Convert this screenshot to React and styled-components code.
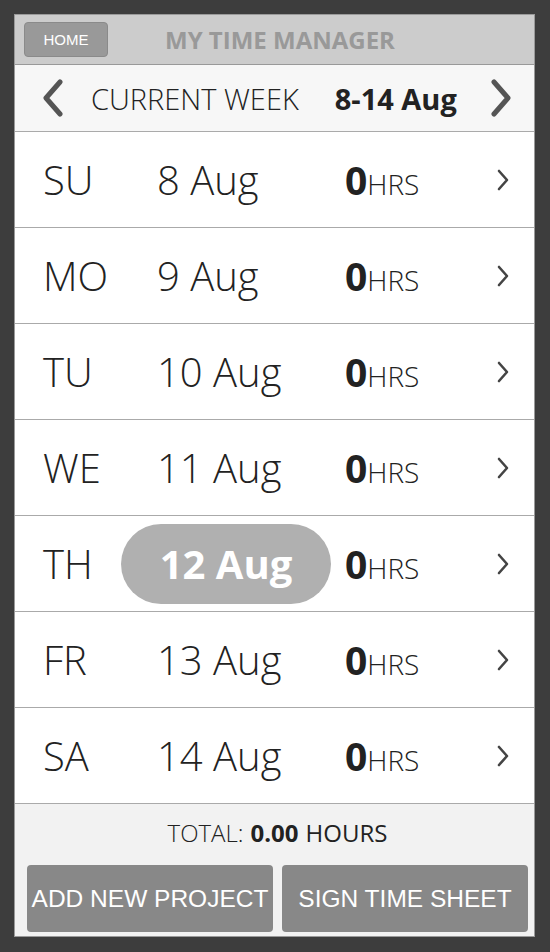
import React from 'react';
import styled, { createGlobalStyle } from 'styled-components';

const Global = createGlobalStyle`
  html, body { margin: 0; padding: 0; background: #3d3d3d; }
  body { font-family: "Open Sans", "Liberation Sans", sans-serif; }
`;

const Frame = styled.div`
  width: 550px;
  height: 952px;
  box-sizing: border-box;
  padding: 14px 15px 15px 14px;
  background: #3d3d3d;
`;

const Screen = styled.div`
  height: 100%;
  display: flex;
  flex-direction: column;
  background: #fff;
  border: 1px solid #9a9a9a;
  box-sizing: border-box;
`;

const Header = styled.div`
  height: 49px;
  display: flex;
  align-items: center;
  background: #cccccc;
  border-bottom: 1px solid #999;
  padding-left: 9px;
`;

const HomeButton = styled.button`
  width: 84px;
  height: 35px;
  background: #999;
  border: 1px solid #8a8a8a;
  border-radius: 4px;
  color: #fff;
  font-family: "Liberation Sans", Arial, sans-serif;
  font-size: 15px;
  padding: 0;
`;

const Title = styled.div`
  flex: 1;
  text-align: center;
  margin-right: 82px;
  font-weight: 700;
  font-size: 24px;
  color: #999;
`;

const WeekBar = styled.div`
  height: 66px;
  display: flex;
  align-items: center;
  background: #f7f7f7;
  border-bottom: 1px solid #aaa;
  padding: 0 22px 0 27px;
`;

const WeekLabel = styled.div`
  font-weight: 300;
  font-size: 29px;
  color: #222;
  margin-left: 27px;
`;

const WeekRange = styled.div`
  font-weight: 700;
  font-size: 29px;
  color: #222;
  margin-left: 36px;
  flex: 1;
`;

const Row = styled.div`
  height: 95px;
  display: flex;
  align-items: center;
  border-bottom: 1px solid #aaa;
  padding: 0 24px 0 28px;
  color: #222;
`;

const Day = styled.div`
  width: 114px;
  font-weight: 300;
  font-size: 40px;
`;

const DateCell = styled.div`
  width: 188px;
  font-weight: 300;
  font-size: 40px;
`;

const Pill = styled.div`
  margin-left: -36px;
  width: 210px;
  height: 80px;
  border-radius: 40px;
  background: #b0b0b0;
  color: #fff;
  font-weight: 700;
  font-size: 40px;
  display: flex;
  align-items: center;
  justify-content: center;
  margin-right: 14px;
`;

const Hours = styled.div`
  flex: 1;
  display: flex;
  align-items: baseline;
  font-size: 28px;
  font-weight: 300;
  b {
    font-size: 39px;
    font-weight: 700;
  }
`;

const Footer = styled.div`
  flex: 1;
  background: #f2f2f2;
  display: flex;
  flex-direction: column;
  padding: 0 6px 4px 12px;
`;

const Total = styled.div`
  height: 57px;
  display: flex;
  align-items: center;
  justify-content: center;
  gap: 7px;
  font-size: 24px;
  font-weight: 300;
  color: #222;
  b { font-weight: 700; }
  span { font-weight: 400; }
`;

const Buttons = styled.div`
  margin-top: auto;
  display: flex;
  gap: 9px;
`;

const ActionButton = styled.button`
  flex: 1;
  height: 67px;
  background: #888;
  border: none;
  border-radius: 4px;
  color: #fff;
  font-family: "Liberation Sans", Arial, sans-serif;
  font-size: 24.5px;
  padding: 0;
`;

const Chevron = ({ dir = 'right', size = 'big' }) =>
  size === 'big' ? (
    <svg width="22" height="38" viewBox="0 0 22 38">
      <path
        d={dir === 'left' ? 'M18 3 L4 19 L18 35' : 'M4 3 L18 19 L4 35'}
        fill="none"
        stroke="#555"
        strokeWidth="5"
        strokeLinecap="round"
        strokeLinejoin="round"
      />
    </svg>
  ) : (
    <svg width="14" height="24" viewBox="0 0 14 24">
      <path d="M3 3 L11 12 L3 21" fill="none" stroke="#444" strokeWidth="2.6" strokeLinecap="round" strokeLinejoin="round" />
    </svg>
  );

const days = [
  ['SU', '8 Aug'],
  ['MO', '9 Aug'],
  ['TU', '10 Aug'],
  ['WE', '11 Aug'],
  ['TH', '12 Aug', true],
  ['FR', '13 Aug'],
  ['SA', '14 Aug'],
];

export default function App() {
  return (
    <Frame>
      <Global />
      <Screen>
        <Header>
          <HomeButton>HOME</HomeButton>
          <Title>MY TIME MANAGER</Title>
        </Header>
        <WeekBar>
          <Chevron dir="left" />
          <WeekLabel>CURRENT WEEK</WeekLabel>
          <WeekRange>8-14 Aug</WeekRange>
          <Chevron dir="right" />
        </WeekBar>
        {days.map(([d, date, active]) => (
          <Row key={d}>
            <Day>{d}</Day>
            {active ? <Pill>{date}</Pill> : <DateCell>{date}</DateCell>}
            <Hours>
              <b>0</b>HRS
            </Hours>
            <Chevron size="small" />
          </Row>
        ))}
        <Footer>
          <Total>
            TOTAL: <b>0.00</b> <span>HOURS</span>
          </Total>
          <Buttons>
            <ActionButton>ADD NEW PROJECT</ActionButton>
            <ActionButton>SIGN TIME SHEET</ActionButton>
          </Buttons>
        </Footer>
      </Screen>
    </Frame>
  );
}
